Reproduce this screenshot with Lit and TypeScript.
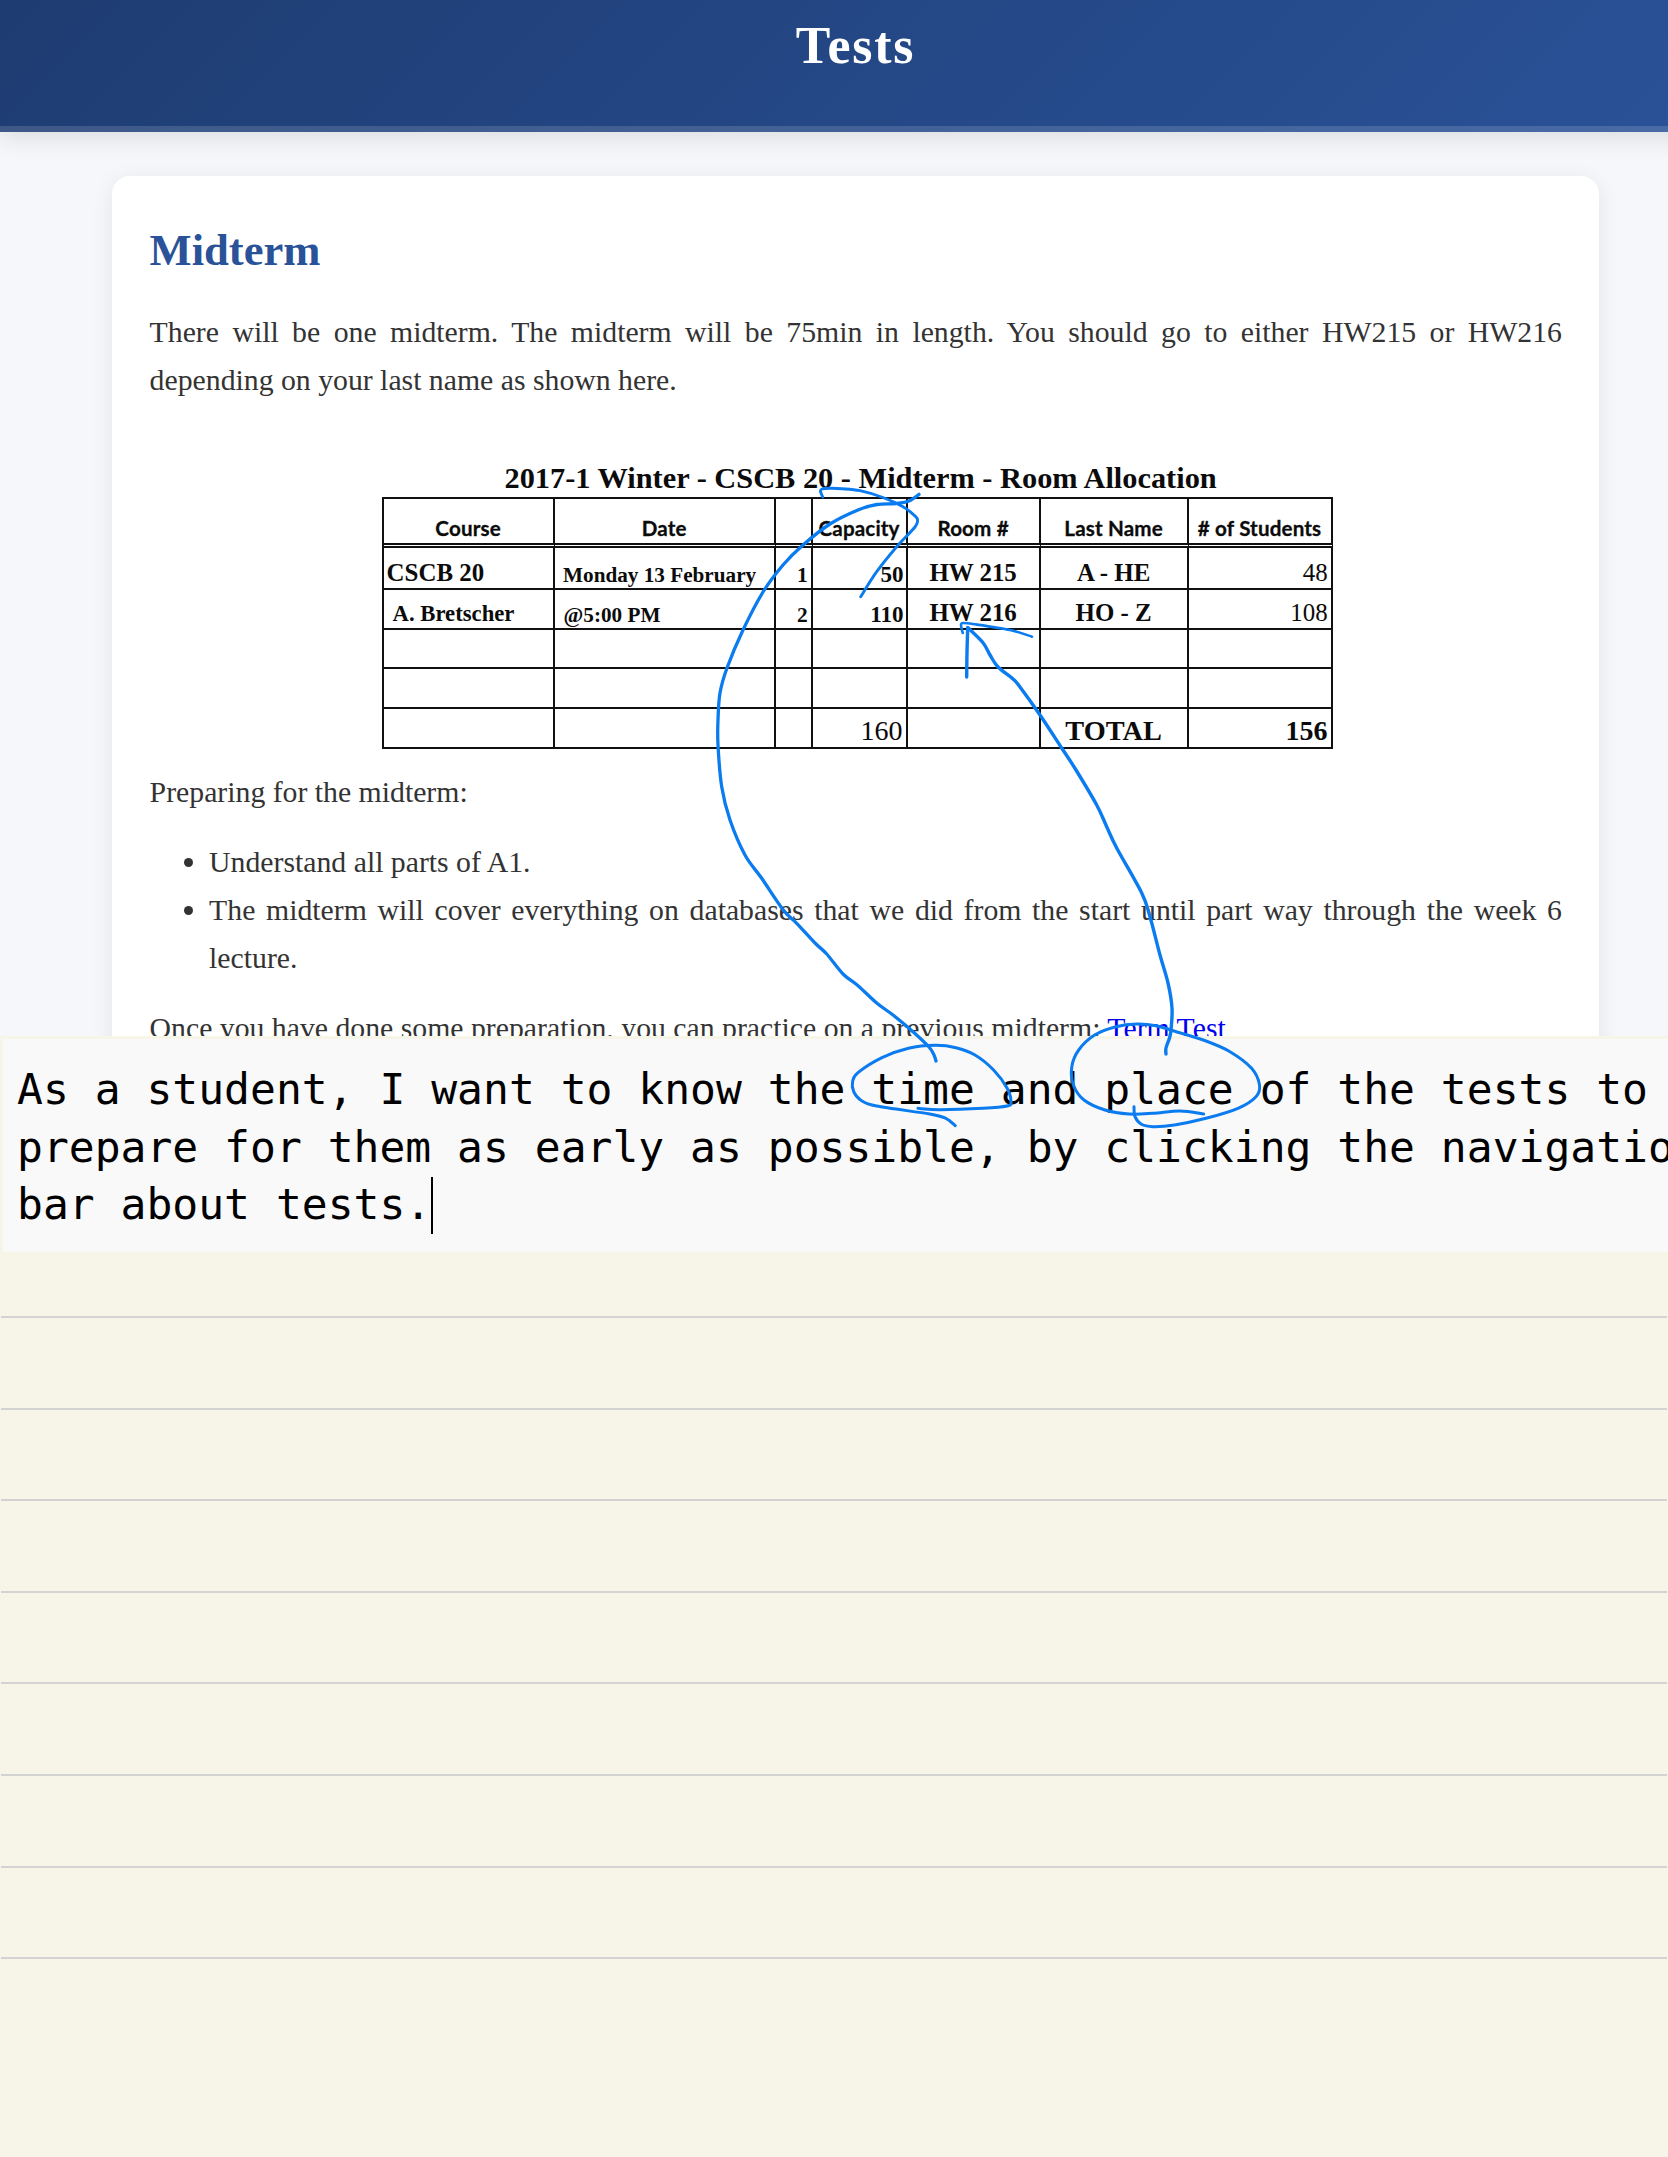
import { LitElement, html, css, svg } from "lit";
import { customElement } from "lit/decorators.js";
import { classMap } from "lit/directives/class-map.js";

type Point = [number, number];
interface Stroke { width: number; points: Point[]; }
interface Cell { text?: string; kind?: string; }

/** Pen strokes drawn over the page, as sampled points. */
const STROKES: Stroke[] = [
  { width: 3.3, points: [[919, 494.3], [909, 501], [896, 503.5], [877, 504.5], [858, 510], [830, 524], [803, 545], [783, 565], [763, 592], [743, 630], [727, 668], [720, 693], [718, 720], [718, 745], [721.7, 786.7], [730, 820], [745, 855], [761.7, 878.3], [783.3, 910], [796.7, 923.3], [815, 943], [826.7, 954], [843, 974], [858, 985.7], [876.7, 1003], [893, 1015], [913, 1031.7], [929, 1047], [934, 1055], [936, 1061]] },
  { width: 2.9, points: [[822.7, 497], [820.5, 491.5], [822, 489], [830, 488.3], [842, 488.7], [860, 490.7], [883, 497.5], [903, 506.7], [915, 516], [917.5, 520], [915, 527], [896.7, 546.7], [876.7, 571.7], [860.7, 596.7]] },
  { width: 2.6, points: [[962.7, 633], [961, 625], [963, 623], [973, 624], [1010, 630], [1032, 636.7]] },
  { width: 3.4, points: [[966.7, 677], [967, 652], [967.7, 628]] },
  { width: 3.4, points: [[967.7, 627.5], [983, 642.7], [990, 655], [998, 667], [1013, 679], [1020, 687], [1040, 715], [1061.7, 748], [1076, 770], [1096.7, 805], [1106.7, 826.7], [1116.7, 848], [1141.7, 893], [1150, 916.7], [1160, 955], [1168, 983], [1172, 1008], [1171, 1030], [1169.5, 1038], [1166, 1048], [1166, 1054]] },
  { width: 3, points: [[918, 1108.3], [940, 1109.7], [983, 1108.3], [1007, 1106], [1011, 1101.7], [1007, 1088], [993.6, 1070], [975, 1055], [956, 1047.7], [935, 1045.3], [908.5, 1048.3], [882, 1057.7], [858, 1072.7], [852.6, 1081.7], [853.7, 1091.7], [860.6, 1100], [876.6, 1106], [929.7, 1114], [945.7, 1118.3], [955.3, 1125.7]] },
  { width: 3, points: [[1134, 1106.7], [1135, 1116.7], [1141.4, 1124.3], [1153, 1126.7], [1174.4, 1125], [1206, 1118.3], [1238, 1108.3], [1256, 1096.7], [1259.5, 1085], [1251.6, 1068.3], [1230, 1051.7], [1206, 1041], [1174, 1031], [1156, 1025.7], [1137, 1024], [1116, 1026.7], [1094.6, 1035], [1078.7, 1050], [1071.8, 1066.7], [1073.4, 1085], [1084, 1100], [1105, 1110], [1129, 1114], [1153, 1113.3], [1180, 1111], [1203.7, 1114]] },
];

/** Joins the points with a Catmull-Rom curve, written as cubic Béziers. */
function smoothPath(p: Point[]): string {
  let d = `M${p[0][0]} ${p[0][1]}`;
  for (let i = 0; i < p.length - 1; i++) {
    const a = p[i - 1] ?? p[i];
    const b = p[i];
    const c = p[i + 1];
    const e = p[i + 2] ?? c;
    d += `C${b[0] + (c[0] - a[0]) / 6} ${b[1] + (c[1] - a[1]) / 6} ${c[0] - (e[0] - b[0]) / 6} ${c[1] - (e[1] - b[1]) / 6} ${c[0]} ${c[1]}`;
  }
  return d;
}

const HEADINGS = ["Course", "Date", "", "Capacity", "Room #", "Last Name", "# of Students"];

const ROWS: Cell[][] = [
  [{ text: "CSCB 20", kind: "course" }, { text: "Monday 13 February", kind: "date" }, { text: "1", kind: "index" }, { text: "50", kind: "capacity" }, { text: "HW 215", kind: "mid" }, { text: "A - HE", kind: "mid" }, { text: "48", kind: "count" }],
  [{ text: "A. Bretscher", kind: "teacher" }, { text: "@5:00 PM", kind: "time" }, { text: "2", kind: "index" }, { text: "110", kind: "capacity" }, { text: "HW 216", kind: "mid" }, { text: "HO - Z", kind: "mid" }, { text: "108", kind: "count" }],
  [{}, {}, {}, {}, {}, {}, {}],
  [{}, {}, {}, {}, {}, {}, {}],
  [{}, {}, {}, { text: "160", kind: "sum" }, {}, { text: "TOTAL", kind: "total" }, { text: "156", kind: "grand" }],
];

@customElement("room-table")
export class RoomTable extends LitElement {
  static styles = css`
    :host { display: block; width: 951px; margin: 55.6px 0 0 232px; color: #0b0b0b; font-family: "Liberation Serif", serif; font-weight: 700; }
    .title { height: 38px; line-height: 38px; font-size: 30.35px; text-align: center; white-space: nowrap; padding-left: 7px; }
    .grid {
      box-sizing: border-box; width: 951px; display: grid;
      grid-template-columns: 171px 221px 37px 95px 133px 148px 144px;
      grid-template-rows: 49px 42px 40px 39px 40px 40px;
      border-top: 2px solid #111; border-left: 2px solid #111;
    }
    .cell {
      box-sizing: border-box; display: flex; align-items: flex-end; justify-content: center; min-width: 0;
      border-right: 2px solid #111; border-bottom: 2px solid #111;
      padding-bottom: 1.8px; font-size: 24.9px; line-height: 1; white-space: nowrap;
    }
    .head { border-bottom: 5px double #111; font-family: Lato, sans-serif; font-size: 20.6px; letter-spacing: 0.15px; -webkit-text-stroke: 0.3px #0b0b0b; padding-bottom: 4px; }
    .course { justify-content: flex-start; padding-left: 3px; }
    .teacher { justify-content: flex-start; padding-left: 9px; font-size: 22.7px; }
    .date { justify-content: flex-start; padding-left: 8.5px; font-size: 21.2px; }
    .time { justify-content: flex-start; padding-left: 9px; font-size: 21.2px; }
    .index { justify-content: flex-end; padding-right: 3px; font-size: 21.4px; }
    .capacity { justify-content: flex-end; padding-right: 2px; font-size: 23px; }
    .count { justify-content: flex-end; padding-right: 3px; font-weight: 400; }
    .sum { justify-content: flex-end; padding-right: 3px; font-weight: 400; font-size: 28px; }
    .total { font-size: 28.3px; }
    .grand { justify-content: flex-end; padding-right: 3px; font-size: 28px; }
  `;

  render() {
    return html`
      <div class="title">2017-1 Winter - CSCB 20 - Midterm - Room Allocation</div>
      <div class="grid">
        ${HEADINGS.map((h) => html`<div class="cell head">${h}</div>`)}
        ${ROWS.map((row) => row.map((c) => html`<div class=${classMap({ cell: true, [c.kind ?? "empty"]: true })}>${c.text ?? ""}</div>`))}
      </div>
    `;
  }
}

@customElement("app-root")
export class AppRoot extends LitElement {
  static styles = css`
    :host { display: block; position: relative; width: 1668px; height: 2157px; overflow: hidden; background: #f7f5e8; }
    .site { width: 1668px; height: 1036px; overflow: hidden; background: #f5f7fb; color: #333; font-family: "Liberation Serif", serif; }
    .canvas { width: 1711px; }
    .header {
      box-sizing: border-box; height: 132px; padding-top: 15.5px; text-align: center;
      background: linear-gradient(135deg, #1e3c72, #2a5298) border-box;
      border-bottom: 6px solid rgba(255, 255, 255, 0.14);
      box-shadow: 0 7px 22px rgba(0, 0, 0, 0.1);
    }
    .header h1 { margin: 0; font-size: 51.8px; line-height: 60px; letter-spacing: 1.8px; color: #fff; }
    .card {
      box-sizing: border-box; width: 1487px; height: 1100px; margin: 44px 0 0 112px; padding: 49px 37px 0 37.6px;
      border-radius: 18px; background: #fff; box-shadow: 0 4px 22px rgba(0, 0, 0, 0.08);
      font-size: 29.75px; line-height: 47.6px; text-align: justify;
    }
    .card h2 { margin: 0; font-size: 44.6px; line-height: 50px; color: #2a5298; }
    .card p { margin: 33px 0 0; }
    .card .prep { margin-top: 19px; }
    .card ul { margin: 23px 0 0; padding: 0 0 0 59.5px; }
    .card .after { margin-top: 23px; }
    .card a { color: #0000ee; text-decoration: none; }
    .note {
      box-sizing: border-box; width: 1665px; height: 213px; margin: 3px 0 0 3px; padding: 22px 0 0 14px; overflow: hidden;
      background: #f9f9f9; color: #000; font-family: "DejaVu Sans Mono", monospace; font-size: 43px; line-height: 57.7px;
    }
    .line { display: flex; align-items: center; height: 57.7px; white-space: pre; }
    .caret { width: 2px; height: 57px; background: #000; }
    .rules { padding: 64px 1px 0; display: grid; grid-auto-rows: 91.6px; }
    .rule { border-top: 2px solid #d2d2d2; }
    .ink { position: absolute; left: 0; top: 0; pointer-events: none; }
  `;

  render() {
    return html`
      <div class="site">
        <div class="canvas">
          <header class="header"><h1>Tests</h1></header>
          <main class="card">
            <h2>Midterm</h2>
            <p>There will be one midterm. The midterm will be 75min in length. You should go to either HW215 or HW216 depending on your last name as shown here.</p>
            <room-table></room-table>
            <p class="prep">Preparing for the midterm:</p>
            <ul>
              <li>Understand all parts of A1.</li>
              <li>The midterm will cover everything on databases that we did from the start until part way through the week 6 lecture.</li>
            </ul>
            <p class="after">Once you have done some preparation, you can practice on a previous midterm: <a>Term Test</a></p>
          </main>
        </div>
      </div>
      <div class="note">
        <div class="line">As a student, I want to know the time and place of the tests to</div>
        <div class="line">prepare for them as early as possible, by clicking the navigatio</div>
        <div class="line">bar about tests.<span class="caret"></span></div>
      </div>
      <div class="rules">${Array.from({ length: 8 }, () => html`<div class="rule"></div>`)}</div>
      <svg class="ink" width="1668" height="2157" viewBox="0 0 1668 2157" fill="none" stroke="#0b7bf0" stroke-linecap="round" stroke-linejoin="round">
        ${STROKES.map((s) => svg`<path d=${smoothPath(s.points)} stroke-width=${s.width} />`)}
      </svg>
    `;
  }
}
